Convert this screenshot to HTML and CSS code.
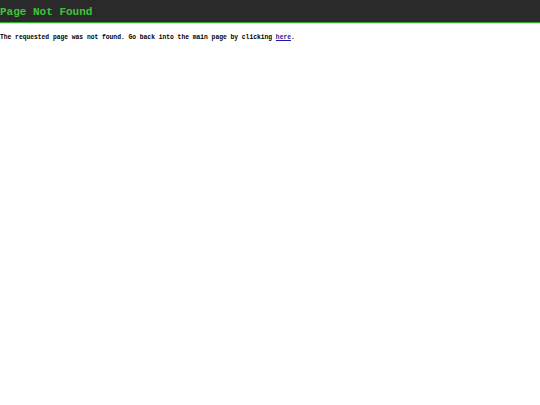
FILE: index.html
```html
<!DOCTYPE html>
<html>
<head>
<meta charset="utf-8">
<link rel="stylesheet" href="styles.css">
<title>Page Not Found</title>
</head>
<body>
<header class="bar"><h1 class="title">Page Not Found</h1></header>
<p class="msg">The requested page was not found. Go back into the main page by clicking <a class="link" href="#">here</a>.</p>
</body>
</html>
```
FILE: styles.css
```css
html, body { margin: 0; padding: 0; background: #ffffff; }
.bar {
  background: #2a2a2a;
  height: 22px;
  border-bottom: 1px solid #3fa23a;
  box-shadow: 0 1px 0 #b9f5b0;
  display: flex;
  align-items: center;
}
.title {
  margin: 0;
  padding-top: 2px;
  font-family: "Liberation Mono", "DejaVu Sans Mono", monospace;
  font-size: 11px;
  font-weight: bold;
  color: #3ec43a;
  line-height: 1;
}
.msg {
  margin: 12px 0 0 0;
  font-family: "Liberation Mono", "DejaVu Sans Mono", monospace;
  font-size: 6.3px;
  font-weight: bold;
  color: #000;
  line-height: 1;
}
.link { color: #1a1aa6; text-decoration: underline; }
```
